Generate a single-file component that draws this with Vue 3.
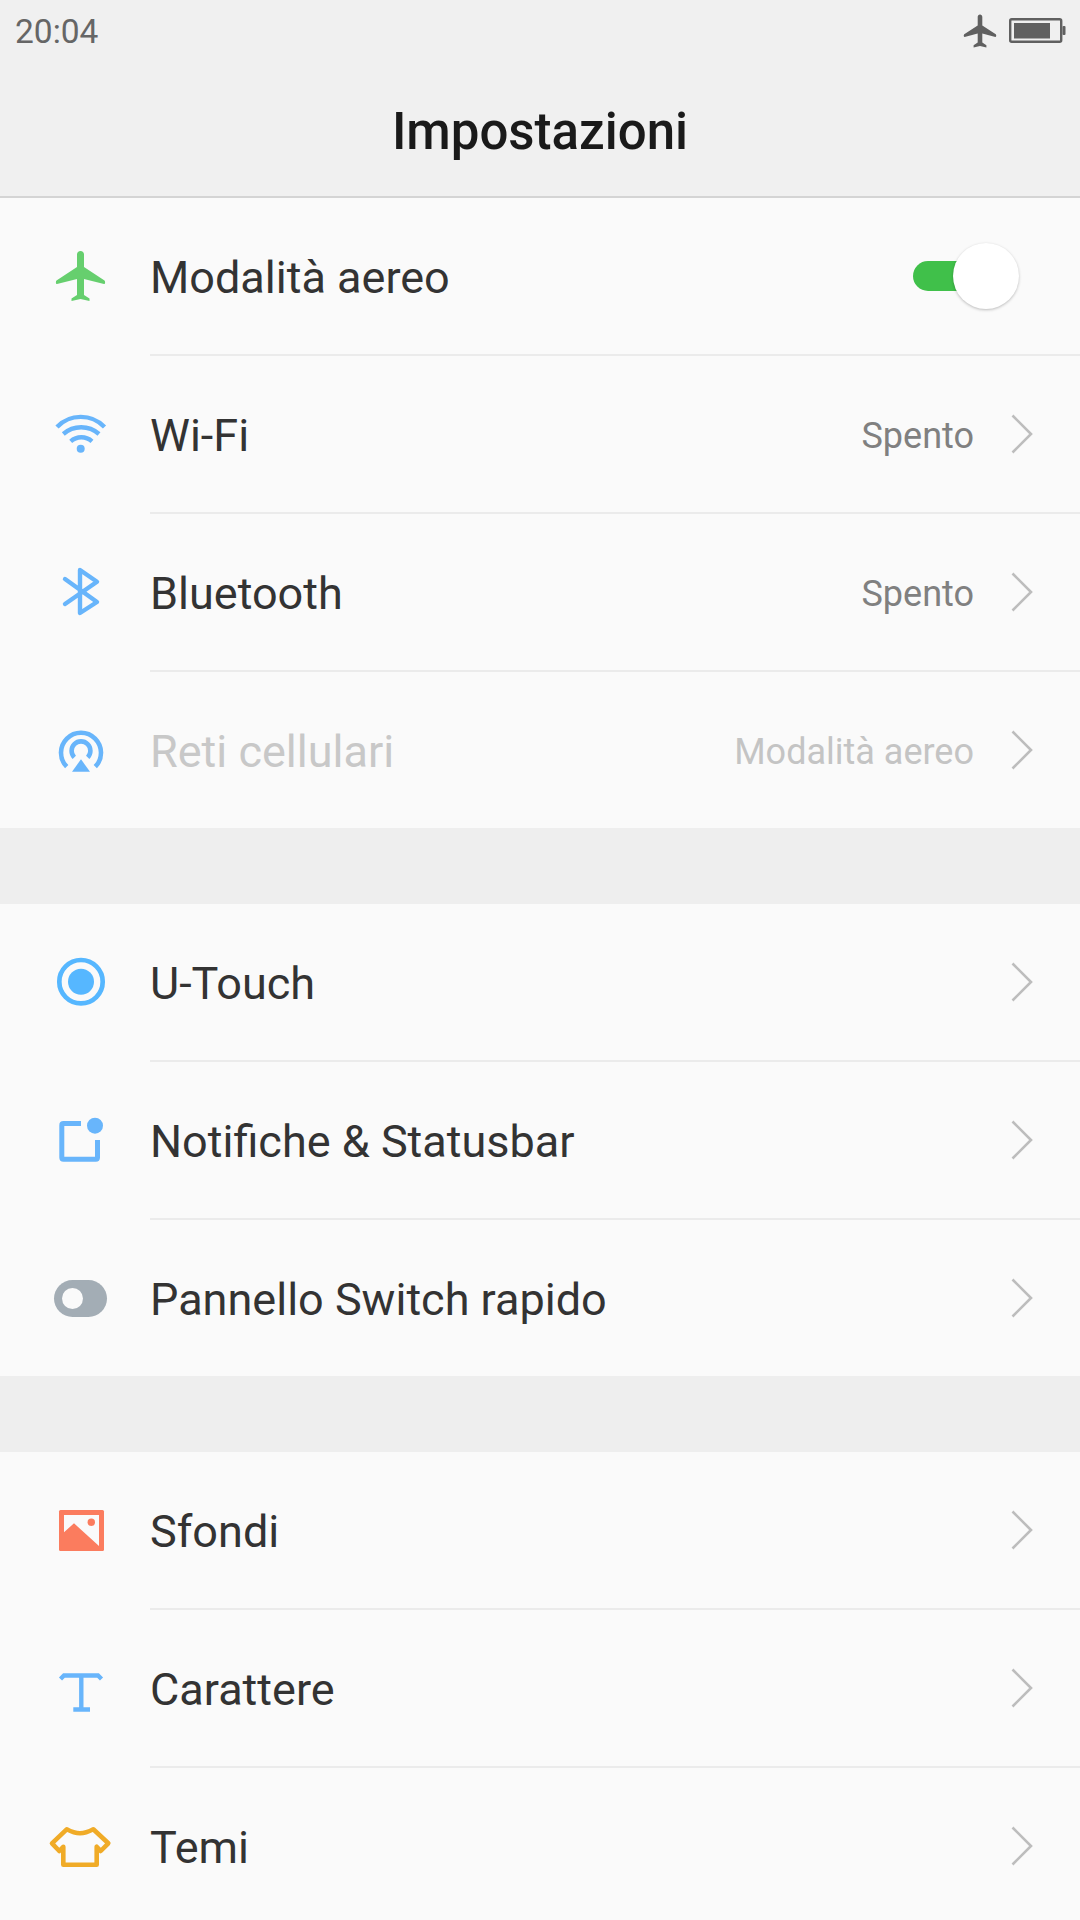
<template>
  <div class="screen">
    <header class="top">
      <div class="status">
        <span class="time">20:04</span>
        <div class="status-icons">
          <svg class="status-plane" width="34" height="34" viewBox="0 0 34 34">
            <path fill="#606060" d="M17 0.5C15.6 0.5 14.7 1.5 14.7 3V11.5L1.2 20.3C0.5 20.8 0.6 23.2 1.6 23L14.7 19.5V28.5L10.6 31.3V33.5L17 32L23.4 33.5V31.3L19.3 28.5V19.5L32.4 23C33.4 23.2 33.5 20.8 32.8 20.3L19.3 11.5V3C19.3 1.5 18.4 0.5 17 0.5Z" />
          </svg>
          <svg width="58" height="26" viewBox="0 0 58 26">
            <rect x="2.2" y="1.2" width="51" height="22.5" rx="1.5" fill="none" stroke="#606060" stroke-width="2.4" />
            <rect x="6" y="5" width="36" height="15.5" fill="#606060" />
            <rect x="54.5" y="8" width="3" height="9" rx="1" fill="#606060" />
          </svg>
        </div>
      </div>
      <h1 class="title">Impostazioni</h1>
    </header>

    <section v-for="(group, i) in groups" :key="i" class="group">
      <div v-for="row in group" :key="row.label" class="row" :class="{ disabled: row.disabled }">
        <div class="icon-wrap">
          <svg class="icon" width="80" height="80" viewBox="0 -1 80 80">
            <path v-if="row.icon === 'plane'" fill="#66cf6e" d="M39.5 14C37.5 14 36 15.5 36 17.5V30L15.5 43.5C14.5 44.3 14.8 47.3 16 47L36 42V58L30.5 61.5V64L39.5 62L48.5 64V61.5L43 58V42L63 47C64.2 47.3 64.5 44.3 63.5 43.5L43 30V17.5C43 15.5 41.5 14 39.5 14Z" />
            <g v-else-if="row.icon === 'wifi'" fill="none" stroke="#68b5fb" stroke-width="4.4">
              <path d="M16 32A33 33 0 0 1 63.5 32" />
              <path d="M22.3 39A27 27 0 0 1 58 39" />
              <path d="M29.7 46.3A16 16 0 0 1 51 46.3" />
              <circle cx="39.7" cy="53.7" r="4" fill="#68b5fb" stroke="none" />
            </g>
            <path v-else-if="row.icon === 'bluetooth'" fill="none" stroke="#68b5fb" stroke-width="4.4" stroke-linecap="round" stroke-linejoin="round" d="M24 26L56 49L39 60V17L56 28.7L24 51" />
            <g v-else-if="row.icon === 'cell'" fill="none" stroke="#68b5fb" stroke-width="4.6">
              <path d="M25.7 55.7A20 20 0 1 1 54.3 55.7" />
              <path d="M33.3 46.4A9.4 9.4 0 1 1 46.7 46.4" />
              <path d="M40 48.3L49 60.7H31Z" fill="#68b5fb" stroke="none" />
            </g>
            <g v-else-if="row.icon === 'touch'">
              <circle cx="40" cy="38.7" r="21.7" fill="none" stroke="#56b7ff" stroke-width="4.7" />
              <circle cx="40" cy="38.7" r="13" fill="#56b7ff" />
            </g>
            <g v-else-if="row.icon === 'notify'">
              <path d="M40 22.5H22.5C21.5 22.5 20.8 23.2 20.8 24.2V56.5C20.8 57.5 21.5 58.2 22.5 58.2H54.8C55.8 58.2 56.5 57.5 56.5 56.5V39" fill="none" stroke="#68b5fb" stroke-width="5" />
              <circle cx="54" cy="24.7" r="8" fill="#68b5fb" />
            </g>
            <g v-else-if="row.icon === 'panel'">
              <rect x="13" y="21" width="53" height="37" rx="18.5" fill="#a3adb5" />
              <circle cx="31.5" cy="39.5" r="10.5" fill="#fafafa" />
            </g>
            <g v-else-if="row.icon === 'wallpaper'">
              <rect x="18" y="19" width="45" height="41" rx="1.5" fill="#fb7c5e" />
              <path d="M23 24H58V55L33 32.3L23 41.3Z" fill="#fafafa" />
              <circle cx="50.3" cy="31.3" r="3.7" fill="#fb7c5e" />
            </g>
            <path v-else-if="row.icon === 'font'" fill="none" stroke="#68b5fb" stroke-width="4.4" d="M19.5 30L23 26.5H57L60.5 30M40.3 26V60M32.3 60.5H49" />
            <path v-else-if="row.icon === 'theme'" fill="none" stroke="#f0ab27" stroke-width="4.6" stroke-linejoin="round" d="M25.7 22.3C30 24.6 34 26.3 39 26.3C44 26.3 48 24.6 52.3 22.3L67.3 36.3L59.7 44L55.7 39.7V57.7H22.3V39.7L18.3 44L11 36.3Z" />
          </svg>
        </div>
        <div class="body">
          <span class="label">{{ row.label }}</span>
          <template v-if="row.toggle">
            <div class="switch">
              <span class="knob"></span>
            </div>
          </template>
          <template v-else>
            <span v-if="row.value" class="value">{{ row.value }}</span>
            <svg class="chevron" width="22" height="40" viewBox="0 0 22 40">
              <path d="M1.5 1.5L20 20L1.5 38.5" fill="none" stroke="#bdbdbd" stroke-width="2.6" />
            </svg>
          </template>
        </div>
      </div>
    </section>
  </div>
</template>

<script setup>
const groups = [
  [
    { icon: 'plane', label: 'Modalità aereo', toggle: true },
    { icon: 'wifi', label: 'Wi-Fi', value: 'Spento' },
    { icon: 'bluetooth', label: 'Bluetooth', value: 'Spento' },
    { icon: 'cell', label: 'Reti cellulari', value: 'Modalità aereo', disabled: true },
  ],
  [
    { icon: 'touch', label: 'U-Touch' },
    { icon: 'notify', label: 'Notifiche & Statusbar' },
    { icon: 'panel', label: 'Pannello Switch rapido' },
  ],
  [
    { icon: 'wallpaper', label: 'Sfondi' },
    { icon: 'font', label: 'Carattere' },
    { icon: 'theme', label: 'Temi' },
  ],
]
</script>

<style scoped>
.screen {
  width: 1080px;
  height: 1920px;
  overflow: hidden;
  background: #eeeeee;
  font-family: Roboto, sans-serif;
}

.top {
  height: 196px;
  background: #f0f0f0;
  border-bottom: 2px solid #d4d4d4;
}

.status {
  height: 62px;
  padding: 0 14px 0 15px;
  display: flex;
  align-items: center;
  justify-content: space-between;
}

.time {
  font-size: 33.5px;
  color: #666666;
}

.status-icons {
  display: flex;
  align-items: center;
  gap: 11px;
}

.title {
  margin: 0;
  height: 134px;
  padding-top: 5px;
  box-sizing: border-box;
  display: flex;
  align-items: center;
  justify-content: center;
  font-size: 51px;
  font-weight: 500;
  color: #1a1a1a;
}

.group {
  background: #fafafa;
  margin-bottom: 76px;
}

.row {
  display: flex;
  padding-left: 41px;
}

.icon-wrap {
  width: 80px;
  height: 156px;
  margin-right: 29px;
  display: flex;
  align-items: center;
}

.icon {
  display: block;
}

.body {
  flex: 1;
  height: 156px;
  padding-right: 47px;
  border-bottom: 2px solid #ebebeb;
  display: flex;
  align-items: center;
}

.row:last-child .body {
  border-bottom: 0;
}

.label {
  flex: 1;
  padding-top: 2px;
  font-size: 45px;
  color: #333333;
}

.value {
  padding-top: 4px;
  font-size: 36px;
  color: #808080;
  margin-right: 38px;
}

.disabled .label {
  color: #c8c8c8;
}

.disabled .value {
  color: #c4c4c4;
}

.chevron {
  display: block;
  margin-left: -1px;
}

.switch {
  position: relative;
  width: 76px;
  height: 30px;
  margin-right: 44px;
  border-radius: 15px 0 0 15px;
  background: #40c04a;
}

.knob {
  position: absolute;
  right: -30px;
  top: -18px;
  width: 66px;
  height: 66px;
  border-radius: 50%;
  background: #ffffff;
  box-shadow: 0 1px 3px rgba(0, 0, 0, 0.25);
}
</style>
